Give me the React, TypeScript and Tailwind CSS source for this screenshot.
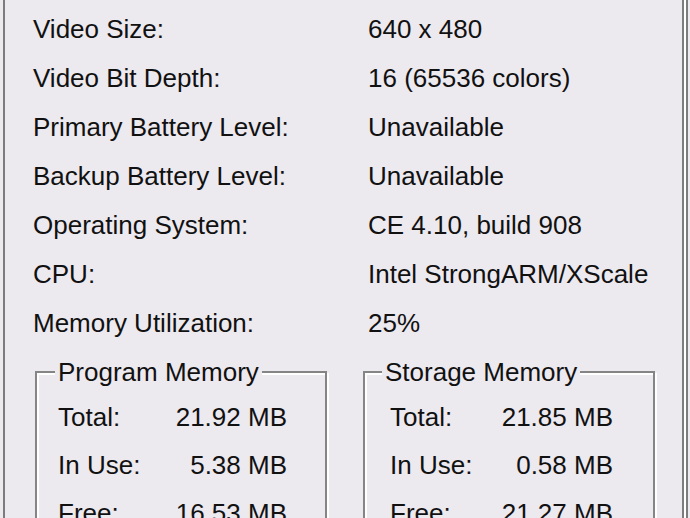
import React from "react";

const rows: [string, string][] = [
  ["Video Size:", "640 x 480"],
  ["Video Bit Depth:", "16 (65536 colors)"],
  ["Primary Battery Level:", "Unavailable"],
  ["Backup Battery Level:", "Unavailable"],
  ["Operating System:", "CE 4.10, build 908"],
  ["CPU:", "Intel StrongARM/XScale"],
  ["Memory Utilization:", "25%"],
];

type MemGroupProps = {
  title: string;
  total: string;
  inUse: string;
  free: string;
  titleLeft: string;
  padding: string;
};

function MemGroup({ title, total, inUse, free, titleLeft, padding }: MemGroupProps) {
  return (
    <div className="relative w-[292px] h-[200px] border-2 border-[#858585] shadow-[inset_2px_2px_0_#ffffff,2px_2px_0_#ffffff]">
      <span className={`absolute -top-[16px] ${titleLeft} px-[3px] bg-[#ece9ef] leading-[30px]`}>
        {title}
      </span>
      <div className={`pt-[20px] ${padding} leading-[48px]`}>
        <div className="flex justify-between">
          <span>Total:</span>
          <span>{total}</span>
        </div>
        <div className="flex justify-between">
          <span>In Use:</span>
          <span>{inUse}</span>
        </div>
        <div className="flex justify-between">
          <span>Free:</span>
          <span>{free}</span>
        </div>
      </div>
    </div>
  );
}

export default function App() {
  return (
    <div className="w-[690px] h-[518px] overflow-hidden bg-[#ece9ef] font-['Liberation_Sans',Arial,sans-serif] text-[26px] text-[#111]">
      <div className="ml-[3px] w-[685px] h-full border-r-2 border-[#7c7c7c]">
        <div className="h-full border-r-2 border-white">
          <div className="h-full border-l-2 border-r-2 border-[#7c7c7c] pl-[28px] pt-[5px]">
            {rows.map(([label, value]) => (
              <div key={label} className="flex leading-[49px]">
                <span className="w-[335px] shrink-0">{label}</span>
                <span>{value}</span>
              </div>
            ))}
            <div className="flex gap-[36px] mt-[23px] ml-[2px]">
              <MemGroup
                title="Program Memory"
                total="21.92 MB"
                inUse="5.38 MB"
                free="16.53 MB"
                titleLeft="left-[18px]"
                padding="pl-[21px] pr-[38px]"
              />
              <MemGroup
                title="Storage Memory"
                total="21.85 MB"
                inUse="0.58 MB"
                free="21.27 MB"
                titleLeft="left-[17px]"
                padding="pl-[25px] pr-[40px]"
              />
            </div>
          </div>
        </div>
      </div>
    </div>
  );
}
